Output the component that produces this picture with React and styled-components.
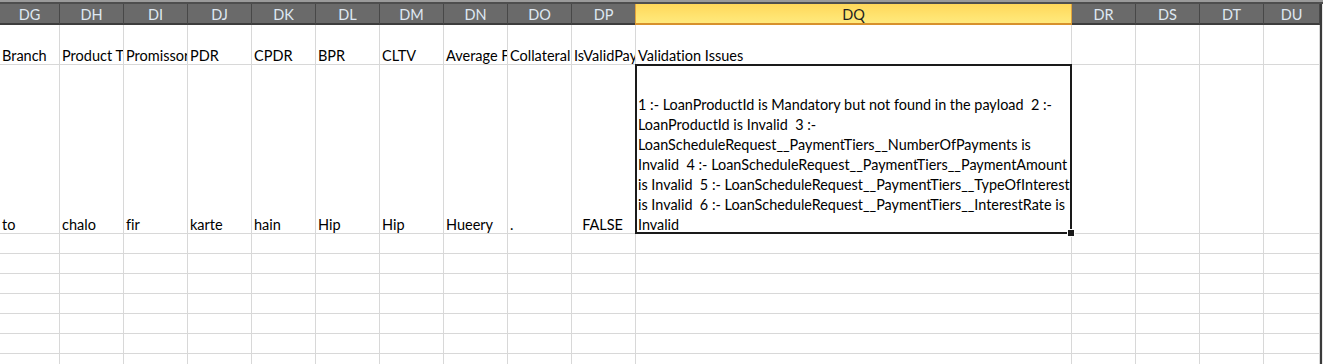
import styled, { createGlobalStyle } from "styled-components";

const GlobalStyle = createGlobalStyle`
  html, body {
    margin: 0;
    padding: 0;
    background: #ffffff;
    overflow: hidden;
  }
  body {
    font-family: Lato, "Liberation Sans", sans-serif;
    font-variant-ligatures: none;
  }
`;

const columns = [
  { key: "DG", width: 60 },
  { key: "DH", width: 64 },
  { key: "DI", width: 64 },
  { key: "DJ", width: 64 },
  { key: "DK", width: 64 },
  { key: "DL", width: 64 },
  { key: "DM", width: 64 },
  { key: "DN", width: 64 },
  { key: "DO", width: 64 },
  { key: "DP", width: 64 },
  { key: "DQ", width: 436, selected: true },
  { key: "DR", width: 64 },
  { key: "DS", width: 64 },
  { key: "DT", width: 64 },
  { key: "DU", width: 56 },
];

const titles = [
  "Branch",
  "Product Type",
  "Promissory",
  "PDR",
  "CPDR",
  "BPR",
  "CLTV",
  "Average F",
  "Collateral",
  "IsValidPayload",
  "Validation Issues",
  "",
  "",
  "",
  "",
];

const values = [
  { text: "to" },
  { text: "chalo" },
  { text: "fir" },
  { text: "karte" },
  { text: "hain" },
  { text: "Hip" },
  { text: "Hip" },
  { text: "Hueery" },
  { text: "." },
  { text: "FALSE", right: true },
  null,
  { text: "" },
  { text: "" },
  { text: "" },
  { text: "" },
];

const issues = [
  "1 :- LoanProductId is Mandatory but not found in the payload  2 :-",
  "LoanProductId is Invalid  3 :-",
  "LoanScheduleRequest__PaymentTiers__NumberOfPayments is",
  "Invalid  4 :- LoanScheduleRequest__PaymentTiers__PaymentAmount",
  "is Invalid  5 :- LoanScheduleRequest__PaymentTiers__TypeOfInterest",
  "is Invalid  6 :- LoanScheduleRequest__PaymentTiers__InterestRate is",
  "Invalid",
];

const template = columns.map((c) => `${c.width}px`).join(" ");

const App = () => {
  return (
    <>
      <GlobalStyle />
      <Sheet>
        <TopStrip />
        <Body>
          <Grid>
            {columns.map((c) => (
              <ColHeader key={c.key} $selected={c.selected}>
                {c.key}
              </ColHeader>
            ))}

            {titles.map((t, i) => (
              <Cell key={`t${i}`} $height={40}>
                <CellText>{t}</CellText>
              </Cell>
            ))}

            {values.map((v, i) =>
              v ? (
                <Cell key={`v${i}`} $height={169}>
                  <CellText $right={v.right}>{v.text}</CellText>
                </Cell>
              ) : (
                <SelectedCell key={`v${i}`}>
                  <WrapText>
                    {issues.map((line, j) => (
                      <Line key={j}>{line}</Line>
                    ))}
                  </WrapText>
                  <Handle />
                </SelectedCell>
              )
            )}

            {Array.from({ length: 7 }).map((_, r) =>
              columns.map((c) => <Cell key={`e${r}${c.key}`} $height={20} />)
            )}
          </Grid>
          <ScrollEdge />
        </Body>
      </Sheet>
    </>
  );
};

export default App;

const Sheet = styled.div`
  width: 1323px;
  height: 364px;
  overflow: hidden;
  display: flex;
  flex-direction: column;
  background: #ffffff;
`;

const TopStrip = styled.div`
  height: 4px;
  flex: none;
  background: #4e4e4e;
  border-top: 2px solid #9a9a9a;
  box-sizing: border-box;
`;

const Body = styled.div`
  display: flex;
  flex: 1;
  min-height: 0;
`;

const Grid = styled.div`
  display: grid;
  grid-template-columns: ${template};
  grid-auto-rows: auto;
  align-content: start;
  flex: none;
`;

const ColHeader = styled.div`
  height: 21px;
  box-sizing: border-box;
  display: flex;
  align-items: center;
  justify-content: center;
  font-size: 14.5px;
  padding-top: 1px;
  color: ${(p) => (p.$selected ? "#1f1f1f" : "#dfe8f2")};
  background: ${(p) =>
    p.$selected
      ? "linear-gradient(to bottom, #ffd75a 0%, #ffe36f 60%, #ffe97d 100%)"
      : "#6a6a6a"};
  border-right: 1px solid ${(p) => (p.$selected ? "#e2a33b" : "#484848")};
  border-left: ${(p) => (p.$selected ? "1px solid #e2a33b" : "none")};
  border-bottom: 2px solid ${(p) => (p.$selected ? "#d7912c" : "#3d3d3d")};
  margin-left: ${(p) => (p.$selected ? "-1px" : "0")};
`;

const Cell = styled.div`
  height: ${(p) => p.$height}px;
  box-sizing: border-box;
  border-right: 1px solid #d8d8d8;
  border-bottom: 1px solid #d8d8d8;
  display: flex;
  align-items: flex-end;
  overflow: hidden;
  min-width: 0;
`;

const CellText = styled.div`
  flex: 1;
  font-size: 14.5px;
  line-height: 16px;
  color: #000000;
  white-space: nowrap;
  overflow: hidden;
  padding: 0 ${(p) => (p.$right ? "12px" : "2px")} 0 2px;
  text-align: ${(p) => (p.$right ? "right" : "left")};
`;

const SelectedCell = styled.div`
  position: relative;
  height: 169px;
  box-sizing: border-box;
  border-right: 1px solid #d8d8d8;
  border-bottom: 1px solid #d8d8d8;
  display: flex;
  align-items: flex-end;

  &::after {
    content: "";
    position: absolute;
    top: -1px;
    left: -1px;
    right: -1px;
    bottom: -1px;
    border: 2px solid #1a1a1a;
    pointer-events: none;
  }
`;

const WrapText = styled.div`
  padding: 0 2px;
  margin-bottom: -2px;
  font-size: 14.4px;
  line-height: 20px;
  color: #000000;
`;

const Line = styled.div`
  white-space: pre;
`;

const Handle = styled.div`
  position: absolute;
  right: -4px;
  bottom: -4px;
  width: 6px;
  height: 6px;
  background: #1a1a1a;
  border: 1px solid #ffffff;
  z-index: 2;
`;

const ScrollEdge = styled.div`
  flex: 1;
  background: #e8e8e8;
  border-left: 2px solid #3a3a3a;
`;
